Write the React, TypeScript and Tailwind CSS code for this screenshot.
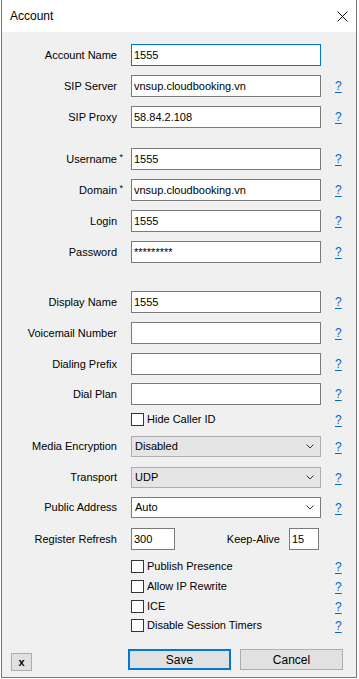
import React from 'react';

const font = "font-['Liberation_Sans',Arial,sans-serif]";

const Help = () => (
  <span className="ml-[14px] text-[12px] leading-none text-[#0066cc] underline underline-offset-2">?</span>
);

const Label = ({ children }: { children: React.ReactNode }) => (
  <span className="w-[115px] shrink-0 text-right">{children}</span>
);

const Star = ({ text }: { text: string }) => (
  <span className="relative">
    {text}
    <span className="absolute -right-[6px] -top-[2px] text-[9px]">*</span>
  </span>
);

const Field = ({
  label,
  value = '',
  focused = false,
  mt = '',
}: {
  label: React.ReactNode;
  value?: string;
  focused?: boolean;
  mt?: string;
}) => (
  <div className={`flex h-[22px] items-center ${mt}`}>
    <Label>{label}</Label>
    <div
      className={`ml-[14px] flex h-full w-[190px] items-center bg-white pl-[2px] ${
        focused ? 'border border-[#0078d7]' : 'border border-[#7a7a7a]'
      }`}
    >
      {value}
    </div>
    <Help />
  </div>
);

const Chevron = () => (
  <svg width="8" height="5" viewBox="0 0 8 5" className="shrink-0">
    <polyline points="0.5,0.5 4,4 7.5,0.5" fill="none" stroke="#333" strokeWidth="1" />
  </svg>
);

const Select = ({ label, value, mt, white = false }: { label: string; value: string; mt: string; white?: boolean }) => (
  <div className={`flex h-[21px] items-center ${mt}`}>
    <Label>{label}</Label>
    <div
      className={`ml-[14px] flex h-full w-[190px] items-center justify-between pl-[3px] pr-[6px] ${
        white ? 'border border-[#7a7a7a] bg-white' : 'border border-[#adadad] bg-[#e5e5e5]'
      }`}
    >
      <span>{value}</span>
      <Chevron />
    </div>
    <Help />
  </div>
);

const Check = ({ label, mt }: { label: string; mt: string }) => (
  <div className={`flex h-[13px] items-center ${mt}`}>
    <span className="w-[115px] shrink-0" />
    <div className="ml-[14px] flex w-[190px] items-center">
      <span className="h-[13px] w-[13px] shrink-0 border border-[#333] bg-white" />
      <span className="ml-[3px] whitespace-nowrap">{label}</span>
    </div>
    <Help />
  </div>
);

export default function App() {
  return (
    <div className={`${font} ml-px h-[678px] w-[356px] border-x border-b border-[#777] bg-[#f0f0f0] text-[11px] text-black`}>
      <div className="flex h-[32px] items-center justify-between bg-white pl-[8px] pr-[8px]">
        <span className="text-[12px]">Account</span>
        <svg width="11" height="11" viewBox="0 0 11 11">
          <path d="M0.5 0.5 L10.5 10.5 M10.5 0.5 L0.5 10.5" stroke="#111" strokeWidth="1" />
        </svg>
      </div>

      <div className="flex flex-col pt-[12px]">
        <div className="flex h-[22px] items-center">
          <Label>Account Name</Label>
          <div className="ml-[14px] flex h-full w-[190px] items-center border border-[#0078d7] bg-white pl-[2px]">1555</div>
        </div>
        <Field label="SIP Server" value="vnsup.cloudbooking.vn" mt="mt-[9px]" />
        <Field label="SIP Proxy" value="58.84.2.108" mt="mt-[9px]" />

        <Field label={<Star text="Username" />} value="1555" mt="mt-[20px]" />
        <Field label={<Star text="Domain" />} value="vnsup.cloudbooking.vn" mt="mt-[9px]" />
        <Field label="Login" value="1555" mt="mt-[9px]" />
        <Field label="Password" value="*********" mt="mt-[9px]" />

        <Field label="Display Name" value="1555" mt="mt-[28px]" />
        <Field label="Voicemail Number" mt="mt-[9px]" />
        <Field label="Dialing Prefix" mt="mt-[9px]" />
        <Field label="Dial Plan" mt="mt-[8px]" />
        <Check label="Hide Caller ID" mt="mt-[8px]" />

        <Select label="Media Encryption" value="Disabled" mt="mt-[10px]" />
        <Select label="Transport" value="UDP" mt="mt-[10px]" />
        <Select label="Public Address" value="Auto" mt="mt-[9px]" white />

        <div className="mt-[10px] flex h-[22px] items-center">
          <Label>Register Refresh</Label>
          <div className="ml-[14px] flex h-full w-[190px] items-center">
            <div className="flex h-full w-[44px] items-center border border-[#7a7a7a] bg-white pl-[2px]">300</div>
            <span className="ml-auto">Keep-Alive</span>
            <div className="ml-[9px] mr-[2px] flex h-full w-[30px] items-center border border-[#7a7a7a] bg-white pl-[2px]">15</div>
          </div>
        </div>

        <Check label="Publish Presence" mt="mt-[10px]" />
        <Check label="Allow IP Rewrite" mt="mt-[7px]" />
        <Check label="ICE" mt="mt-[7px]" />
        <Check label="Disable Session Timers" mt="mt-[6px]" />

        <div className="mt-[17px] flex items-start">
          <button className="ml-[9px] mt-[4px] flex h-[18px] w-[21px] items-center justify-center border border-[#adadad] bg-[#e1e1e1] text-[11px] font-bold leading-none">
            x
          </button>
          <button className="ml-[96px] h-[21px] w-[103px] border-2 border-[#0078d7] bg-[#e1e1e1] text-[12px]">Save</button>
          <button className="ml-[9px] h-[21px] w-[103px] border border-[#adadad] bg-[#e1e1e1] text-[12px]">Cancel</button>
        </div>
      </div>
    </div>
  );
}
